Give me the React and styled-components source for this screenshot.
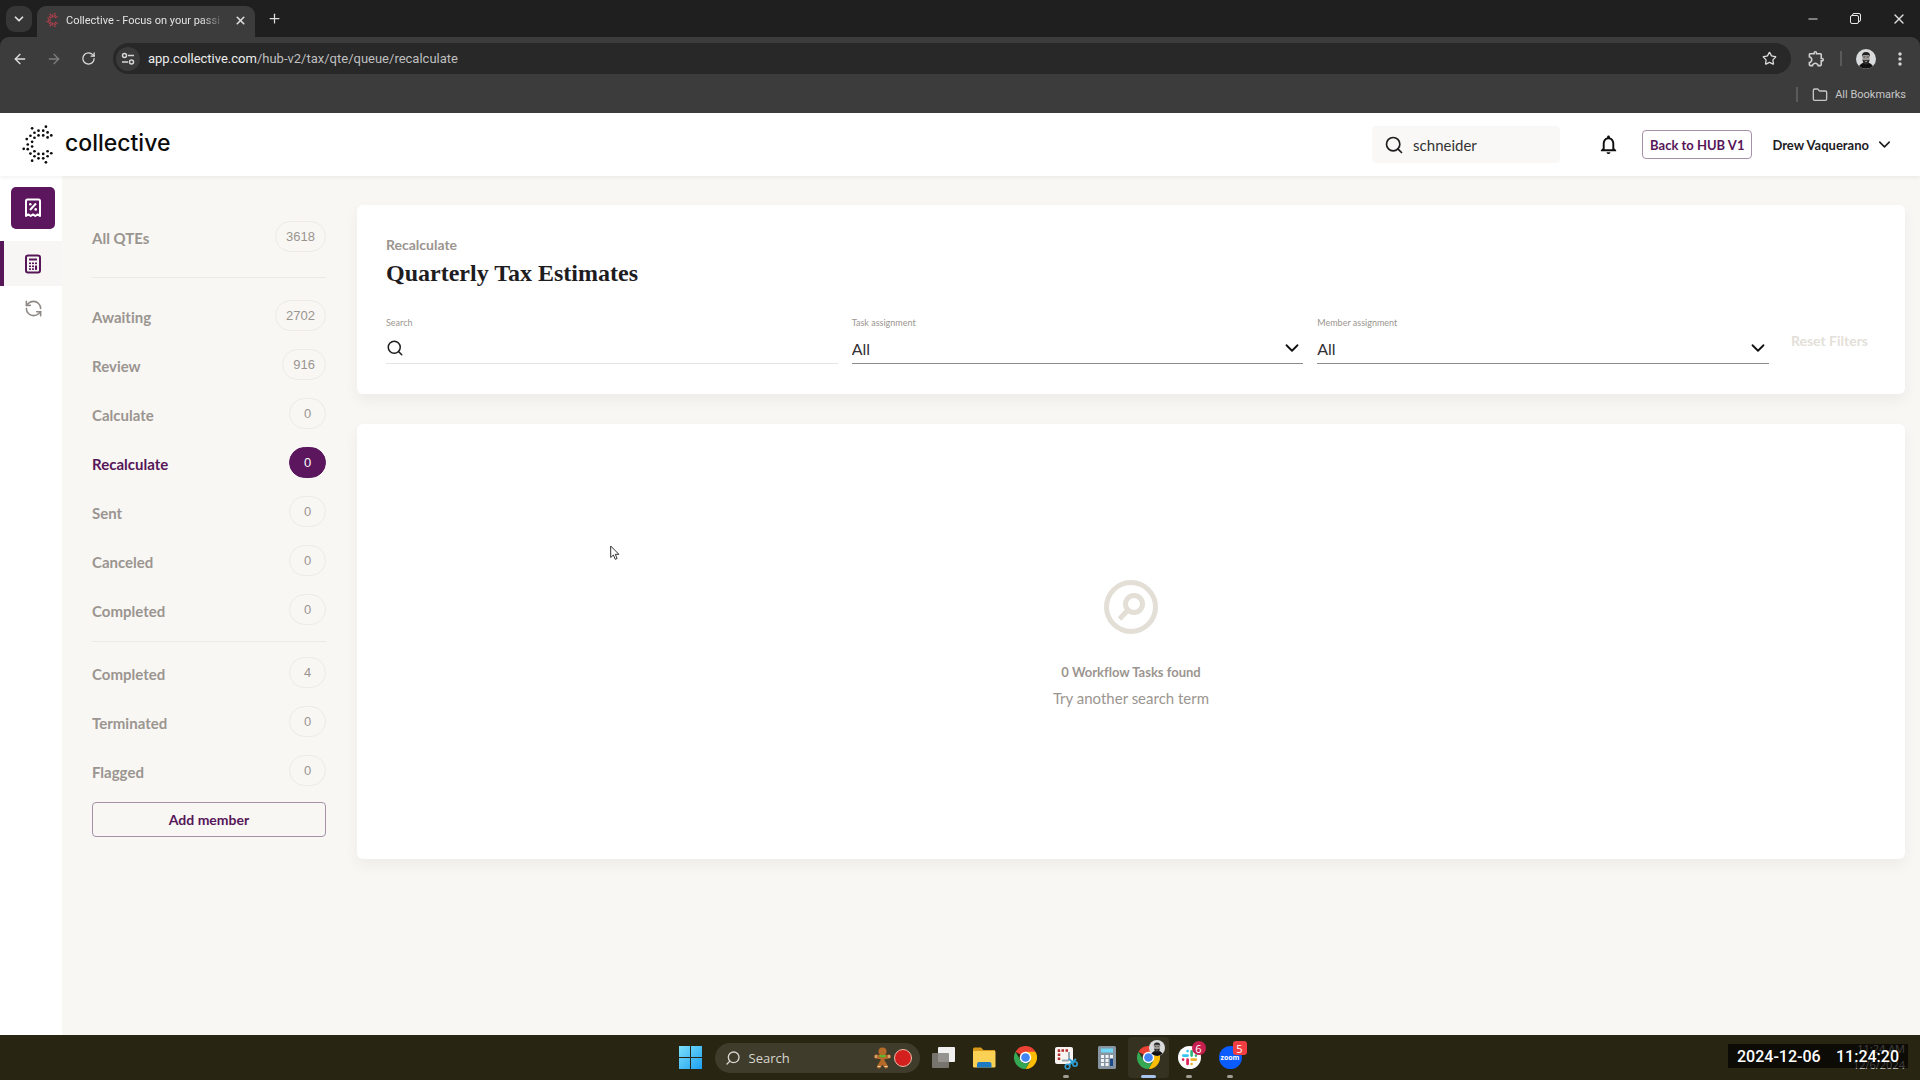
import React, { useState } from 'react';
import styled, { createGlobalStyle } from 'styled-components';
import { Search, ChevronDown, RefreshCcw, Plus, X, Minus, ArrowLeft, ArrowRight, RotateCw, Folder, Star } from 'lucide-react';
import { MdNotificationsNone, MdOutlineExtension, MdMoreVert } from 'react-icons/md';

const GlobalStyle = createGlobalStyle`
    * {
        box-sizing: border-box;
    }
    body {
        margin: 0;
        font-family: Lato, 'Liberation Sans', sans-serif;
        font-variant-ligatures: none;
        color: #1e1c1f;
        background-color: #f8f7f4;
    }
    button, input, select {
        font-family: inherit;
        color: inherit;
        border: none;
        background: none;
        padding: 0;
        margin: 0;
        outline: none;
    }
    a {
        color: inherit;
        text-decoration: none;
    }
    svg {
        display: block;
        flex-shrink: 0;
    }
`;

const logoDots = [
    [96, 384], [137, 379], [115, 391], [129, 391], [103, 397], [142, 396],
    [91, 406], [115, 405], [129, 405], [153, 405], [103, 412], [142, 411],
    [80, 416], [96, 424], [83, 432], [96, 438], [71, 445], [83, 446],
    [91, 459], [103, 452], [115, 460], [129, 460], [142, 452], [153, 458],
    [103, 467], [115, 473], [129, 473], [142, 467], [96, 480], [137, 485],
];

const DotLogo = ({ size, color, r = 4 }) => (
    <svg width={size} height={size} viewBox="54 374 116 116" fill={color} aria-hidden="true">
        {logoDots.map(([x, y]) => <circle key={`${x}-${y}`} cx={x} cy={y} r={r} />)}
    </svg>
);

const ReceiptIcon = () => (
    <svg width="18" height="20" viewBox="0 0 18 20" fill="none" stroke="#fff" strokeWidth="2" aria-hidden="true">
        <path d="M2 18V3a1.5 1.5 0 0 1 1.5-1.5h11A1.5 1.5 0 0 1 16 3v15l-2.3-1.6-2.4 1.6L9 16.4 6.7 18l-2.4-1.6z" strokeLinejoin="round" />
        <path d="M6 12l6-6.5" />
        <circle cx="6.3" cy="6.3" r="1.3" fill="#fff" stroke="none" />
        <circle cx="11.7" cy="11.4" r="1.3" fill="#fff" stroke="none" />
    </svg>
);

const CalculatorIcon = () => (
    <svg width="16" height="20" viewBox="0 0 16 20" aria-hidden="true">
        <rect x="1" y="1.5" width="14" height="17" rx="2" fill="none" stroke="#561658" strokeWidth="2" />
        <g fill="#561658">
            <rect x="4" y="4.5" width="8" height="2" />
            <rect x="4" y="8.5" width="2" height="1.6" />
            <rect x="7" y="8.5" width="2" height="1.6" />
            <rect x="10" y="8.5" width="2" height="1.6" />
            <rect x="4" y="11.5" width="2" height="1.6" />
            <rect x="7" y="11.5" width="2" height="1.6" />
            <rect x="4" y="14.3" width="2" height="1.6" />
            <rect x="7" y="14.3" width="2" height="1.6" />
            <rect x="10" y="11.5" width="2" height="4.4" />
        </g>
    </svg>
);

const EmptyIcon = () => (
    <svg width="54" height="54" viewBox="0 0 54 54" fill="none" stroke="#e3dfd6" strokeWidth="5" aria-hidden="true">
        <circle cx="27" cy="27" r="24.5" />
        <circle cx="30" cy="24" r="8.5" />
        <path d="M24 30l-8.5 9" />
    </svg>
);

const TuneIcon = () => (
    <svg width="14" height="14" viewBox="0 0 14 14" fill="none" stroke="#d6d6d6" strokeWidth="1.5" aria-hidden="true">
        <circle cx="3.5" cy="3.5" r="2" />
        <path d="M7 3.5h6M1 10h6" />
        <circle cx="10.5" cy="10" r="2" />
    </svg>
);

const RestoreIcon = () => (
    <svg width="11" height="11" viewBox="0 0 11 11" fill="none" stroke="#e8e8e8" aria-hidden="true">
        <rect x="0.5" y="2.5" width="8" height="8" rx="1.5" />
        <path d="M2.5 2.5V2A1.5 1.5 0 0 1 4 .5h5A1.5 1.5 0 0 1 10.5 2v5A1.5 1.5 0 0 1 9 8.5h-.5" />
    </svg>
);

const Portrait = ({ size }) => (
    <svg width={size} height={size} viewBox="0 0 20 20" aria-hidden="true">
        <circle cx="10" cy="10" r="10" fill="#d9dadb" />
        <path d="M3 17q2-3 5-3.5h4q3 .5 5 3.5a10 10 0 0 1-14 0z" fill="#111" />
        <path d="M6.5 7q0-3 3.5-3t3.5 3v4q-1 4-3.5 4t-3.5-4z" fill="#9c9896" />
        <path d="M6 8q-.5-5 4-5t4 5l-1-2H7z" fill="#222" />
        <path d="M6.5 10.5q1.5 1.2 3.5.5 2 .7 3.500-.5-.5 5-3.500 5t-3.500-5z" fill="#2b2a2a" />
        <path d="M7.3 8h2M10.7 8h2" stroke="#333" strokeWidth=".8" />
        <path d="M9 12.5h2" stroke="#b5b0ae" strokeWidth=".8" />
    </svg>
);

const Chrome = () => (
    <svg width="23" height="23" viewBox="0 0 48 48" aria-hidden="true">
        <path d="M24 24L3.200 12A24 24 0 0 1 44.800 12z" fill="#ea4335" />
        <path d="M24 12h20.800A24 24 0 0 1 24 48l10.400-18z" fill="#fbbc05" />
        <path d="M3.200 12l10.400 18A12 12 0 0 0 34.400 30L24 48A24 24 0 0 1 3.200 12z" fill="#34a853" />
        <circle cx="24" cy="24" r="12" fill="#fff" />
        <circle cx="24" cy="24" r="9" fill="#4285f4" />
    </svg>
);

const Windows = () => (
    <svg width="23" height="23" viewBox="0 0 23 23" aria-hidden="true">
        <defs>
            <linearGradient id="win" x1="0" y1="0" x2="1" y2="1">
                <stop offset="0" stopColor="#7be0fb" />
                <stop offset="1" stopColor="#1d9ff0" />
            </linearGradient>
        </defs>
        <path d="M0 0h11v11H0zM12 0h11v11H12zM0 12h11v11H0zM12 12h11v11H12z" fill="url(#win)" />
    </svg>
);

const TaskView = () => (
    <svg width="23" height="21" viewBox="0 0 23 21" aria-hidden="true">
        <rect x="6" width="17" height="15" rx="1" fill="#f1f0f0" />
        <rect y="6" width="17" height="15" rx="1" fill="#85837f" fillOpacity=".85" />
    </svg>
);

const Explorer = () => (
    <svg width="24" height="21" viewBox="0 0 24 21" aria-hidden="true">
        <path d="M1 2a1.5 1.5 0 0 1 1.5-1.5H9L11.5 3H23v5H1z" fill="#d99a1c" />
        <rect x="1" y="4" width="22.5" height="16.5" rx="1" fill="#fad155" />
        <path d="M5 20.5V17a2 2 0 0 1 2-2h10.5a2 2 0 0 1 2 2v3.5z" fill="#1f7ac4" />
    </svg>
);

const Snip = () => (
    <svg width="24" height="24" viewBox="0 0 24 24" aria-hidden="true">
        <rect x="1" y="1" width="18" height="17" rx="2" fill="#f7f4f2" />
        <path d="M5 14V4.5h9" fill="none" stroke="#b62b2b" strokeWidth="2.5" strokeDasharray="2.5 1.5" />
        <path d="M15 6v8M8 14.5h7" stroke="#9aa7b2" strokeWidth="2" />
        <path d="M22 13l-7 6M15 13l5 4" stroke="#2f9fd6" strokeWidth="2" />
        <circle cx="13.5" cy="20.5" r="2.3" fill="none" stroke="#2f9fd6" strokeWidth="1.6" />
        <circle cx="21" cy="18" r="2.2" fill="none" stroke="#2f9fd6" strokeWidth="1.6" />
    </svg>
);

const CalcApp = () => (
    <svg width="18" height="23" viewBox="0 0 18 23" aria-hidden="true">
        <rect width="18" height="23" rx="1.5" fill="#8794a1" />
        <rect x="3" y="2.5" width="12" height="4" fill="#6fd6f5" />
        <g fill="#f1f4f7">
            <rect x="3" y="9" width="3" height="3" />
            <rect x="7.5" y="9" width="3" height="3" />
            <rect x="3" y="13" width="3" height="3" />
            <rect x="7.5" y="13" width="3" height="3" />
            <rect x="3" y="17" width="3" height="3" />
            <rect x="7.5" y="17" width="3" height="3" />
            <rect x="12" y="9" width="3" height="3" />
        </g>
        <rect x="12" y="13" width="3" height="7" fill="#1b4a8d" />
    </svg>
);

const Slack = () => (
    <svg width="23" height="23" viewBox="0 0 24 24" aria-hidden="true">
        <circle cx="12" cy="12" r="12" fill="#fff" />
        <g strokeWidth="2.8" strokeLinecap="round">
            <path d="M5.5 10H10M10 5.3h0" stroke="#36c5f0" />
            <path d="M14.2 5.5V10M18.7 10h0" stroke="#2eb67d" />
            <path d="M14.2 14.2h4.5M14.2 18.8h0" stroke="#ecb22e" />
            <path d="M10 14.2v4.5M5.3 14.2h0" stroke="#e01e5a" />
        </g>
    </svg>
);

const Gingerbread = () => (
    <svg width="17" height="22" viewBox="0 0 17 22" aria-hidden="true">
        <circle cx="8.5" cy="4.5" r="4" fill="#b56a2a" />
        <path d="M8.5 8v7M2 9.5l6.5 1 6.5-1M8.5 14L5 19.5M8.5 14l3.5 5.5" stroke="#b56a2a" strokeWidth="4" strokeLinecap="round" fill="none" />
        <path d="M5.5 8.5q3 1.5 6 0" stroke="#5cb531" strokeWidth="2" fill="none" />
        <path d="M3.5 19.5h3M10.5 19.5h3M2 8v3M15 8v3" stroke="#f3d9b5" />
    </svg>
);

const PointerArrow = () => (
    <svg width="10" height="16" viewBox="0 0 10 16" aria-hidden="true">
        <path d="M.7 1v11.5l2.7-2.5 1.8 4.3 1.9-.8L5.3 9.3h3.6z" fill="#fff" stroke="#333" strokeWidth="1" />
    </svg>
);

const topItems = [{ name: 'All QTEs', count: 3618 }];
const stageItems = [
    { name: 'Awaiting', count: 2702 },
    { name: 'Review', count: 916 },
    { name: 'Calculate', count: 0 },
    { name: 'Recalculate', count: 0, active: true },
    { name: 'Sent', count: 0 },
    { name: 'Canceled', count: 0 },
    { name: 'Completed', count: 0 },
];
const statusItems = [
    { name: 'Completed', count: 4 },
    { name: 'Terminated', count: 0 },
    { name: 'Flagged', count: 0 },
];

const QueueList = ({ items }) => (
    <List>
        {items.map(({ name, count, active }) => (
            <li key={name}>
                <QueueLink href={`#${name.toLowerCase()}`} $active={active}>
                    <span>{name}</span>
                    <Count $active={active}>{count}</Count>
                </QueueLink>
            </li>
        ))}
    </List>
);

const SelectField = ({ id, label }) => (
    <Field>
        <label htmlFor={id}>{label}</label>
        <SelectWrap>
            <select id={id} defaultValue="All">
                <option>All</option>
            </select>
            <ChevronDown size={22} color="#111" strokeWidth={2} />
        </SelectWrap>
    </Field>
);

const App = () => {
    const [query, setQuery] = useState('schneider');
    return (
        <Screen>
            <GlobalStyle />
            <BrowserTop>
                <TabStrip>
                    <TabMenu aria-label="Search tabs"><ChevronDown size={14} strokeWidth={3} /></TabMenu>
                    <Tab>
                        <DotLogo size={14} color="#c2414e" r={6} />
                        <p>Collective - Focus on your passi</p>
                        <IconButton $size={16} aria-label="Close tab"><X size={13} strokeWidth={3} /></IconButton>
                    </Tab>
                    <IconButton $size={28} aria-label="New tab"><Plus size={15} strokeWidth={2} /></IconButton>
                    <WindowButtons>
                        <IconButton $size={43} aria-label="Minimize"><Minus size={14} strokeWidth={2} /></IconButton>
                        <IconButton $size={43} aria-label="Restore"><RestoreIcon /></IconButton>
                        <IconButton $size={43} aria-label="Close"><X size={16} strokeWidth={2} /></IconButton>
                    </WindowButtons>
                </TabStrip>
                <Toolbar>
                    <IconButton $size={34} aria-label="Back"><ArrowLeft size={16} /></IconButton>
                    <IconButton $size={34} $dim aria-label="Forward"><ArrowRight size={16} /></IconButton>
                    <IconButton $size={34} aria-label="Reload"><RotateCw size={15} strokeWidth={2} /></IconButton>
                    <AddressBar>
                        <SiteInfo aria-label="Site information"><TuneIcon /></SiteInfo>
                        <p>app.collective.com<span>/hub-v2/tax/qte/queue/recalculate</span></p>
                        <IconButton $size={28} aria-label="Bookmark"><Star size={15} /></IconButton>
                    </AddressBar>
                    <ToolbarEnd>
                        <MdOutlineExtension size={19} color="#d0d0d0" />
                        <Separator />
                        <Portrait size={20} />
                        <MdMoreVert size={20} color="#d6d6d6" />
                    </ToolbarEnd>
                </Toolbar>
                <BookmarkBar>
                    <Separator />
                    <BookmarkButton><Folder size={16} strokeWidth={2} />All Bookmarks</BookmarkButton>
                </BookmarkBar>
            </BrowserTop>

            <Header>
                <Brand href="#home"><DotLogo size={39} color="#0c0c0c" /><span>collective</span></Brand>
                <HeaderSearch>
                    <Search size={20} strokeWidth={2} />
                    <input aria-label="Search members" value={query} onChange={(e) => setQuery(e.target.value)} />
                </HeaderSearch>
                <IconButton $size={24} $dark aria-label="Notifications"><MdNotificationsNone size={23} /></IconButton>
                <HubButton>Back to HUB V1</HubButton>
                <UserMenu>Drew Vaquerano<ChevronDown size={19} strokeWidth={2} /></UserMenu>
            </Header>

            <Body>
                <Rail aria-label="Sections">
                    <RailTile href="#taxes" aria-label="Taxes"><ReceiptIcon /></RailTile>
                    <RailLink href="#estimates" $active aria-label="Estimates"><CalculatorIcon /></RailLink>
                    <RailLink href="#sync" aria-label="Sync"><RefreshCcw size={19} color="#8f8986" /></RailLink>
                </Rail>
                <Sidebar>
                    <QueueList items={topItems} />
                    <Divider $loose />
                    <QueueList items={stageItems} />
                    <Divider />
                    <QueueList items={statusItems} />
                    <AddButton>Add member</AddButton>
                </Sidebar>
                <Main>
                    <Card>
                        <h2>Recalculate</h2>
                        <h1>Quarterly Tax Estimates</h1>
                        <Filters>
                            <Field $light>
                                <label htmlFor="filter-search">Search</label>
                                <SearchWrap>
                                    <Search size={18} strokeWidth={2} />
                                    <input id="filter-search" />
                                </SearchWrap>
                            </Field>
                            <SelectField id="task" label="Task assignment" />
                            <SelectField id="member" label="Member assignment" />
                            <ResetButton disabled>Reset Filters</ResetButton>
                        </Filters>
                    </Card>
                    <EmptyCard>
                        <EmptyIcon />
                        <h3>0 Workflow Tasks found</h3>
                        <p>Try another search term</p>
                        <Pointer><PointerArrow /></Pointer>
                    </EmptyCard>
                </Main>
            </Body>

            <Taskbar>
                <Slot aria-label="Start"><Windows /></Slot>
                <TaskSearch>
                    <Search size={16} strokeWidth={2} />
                    <span>Search</span>
                    <Gingerbread />
                    <RedBall />
                </TaskSearch>
                <Slot aria-label="Task view"><TaskView /></Slot>
                <Slot aria-label="File Explorer"><Explorer /></Slot>
                <Slot aria-label="Chrome"><Chrome /></Slot>
                <Slot aria-label="Snipping Tool" $open><Snip /></Slot>
                <Slot aria-label="Calculator"><CalcApp /></Slot>
                <Slot aria-label="Chrome, Drew" $active>
                    <Chrome />
                    <Badge $face><Portrait size={16} /></Badge>
                </Slot>
                <Slot aria-label="Slack" $open><Slack /><Badge>6</Badge></Slot>
                <Slot aria-label="Zoom" $open><Zoom>zoom</Zoom><Badge $square>5</Badge></Slot>
                <Clock>11:24 AM<br />12/6/2024</Clock>
                <Stamp><span>2024-12-06</span><span>11:24:20</span></Stamp>
            </Taskbar>
        </Screen>
    );
};

const Screen = styled.div`
    min-height: 100vh;
    display: flex;
    flex-direction: column;
`;

const IconButton = styled.button`
    width: ${({ $size }) => $size}px;
    height: ${({ $size }) => Math.min($size, 28)}px;
    display: flex;
    align-items: center;
    justify-content: center;
    flex-shrink: 0;
    color: ${({ $dim, $dark }) => ($dark ? '#0f0f0f' : $dim ? '#7d7d7d' : '#dedede')};
`;

const BrowserTop = styled.div`
    background-color: #1f1f1f;
    font-family: Roboto, 'Open Sans', sans-serif;
`;

const TabStrip = styled.div`
    height: 37px;
    display: flex;
    align-items: center;
    padding-left: 6px;
`;

const TabMenu = styled.button`
    width: 26px;
    height: 26px;
    margin-right: 5px;
    display: flex;
    align-items: center;
    justify-content: center;
    border-radius: 9px;
    background-color: #363636;
    color: #e3e3e3;
`;

const Tab = styled.div`
    width: 218px;
    height: 31px;
    align-self: flex-end;
    display: flex;
    align-items: center;
    gap: 7px;
    padding: 0 7px 3px 8px;
    margin-right: 5px;
    border-radius: 9px 9px 0 0;
    background-color: #3c3c3c;
    p {
        flex: 1;
        margin: 0;
        white-space: nowrap;
        font-size: 11px;
        color: #e3e3e3;
        mask-image: linear-gradient(to right, #000 85%, transparent);
    }
`;

const WindowButtons = styled.div`
    margin-left: auto;
    display: flex;
`;

const Toolbar = styled.div`
    height: 43px;
    display: flex;
    align-items: center;
    padding: 0 10px 0 3px;
    border-radius: 9px 9px 0 0;
    background-color: #3c3c3c;
`;

const AddressBar = styled.div`
    flex: 1;
    height: 31px;
    margin-left: 8px;
    display: flex;
    align-items: center;
    padding: 0 8px 0 3px;
    border-radius: 16px;
    background-color: #282828;
    p {
        flex: 1;
        margin: 0 0 0 8px;
        font-size: 13px;
        color: #ececec;
    }
    span {
        color: #bfbfbf;
    }
`;

const SiteInfo = styled.button`
    width: 24px;
    height: 24px;
    display: flex;
    align-items: center;
    justify-content: center;
    border-radius: 50%;
    background-color: #3a3a3a;
`;

const ToolbarEnd = styled.div`
    display: flex;
    align-items: center;
    gap: 14px;
    padding-left: 16px;
`;

const Separator = styled.span`
    width: 2px;
    height: 15px;
    background-color: #5a5a5a;
`;

const BookmarkBar = styled.div`
    height: 33px;
    display: flex;
    align-items: center;
    justify-content: flex-end;
    gap: 14px;
    padding: 0 14px 4px 0;
    background-color: #3c3c3c;
`;

const BookmarkButton = styled.button`
    display: flex;
    align-items: center;
    gap: 7px;
    font-size: 11px;
    color: #c7c7c7;
`;

const Header = styled.header`
    height: 63px;
    display: flex;
    align-items: center;
    padding: 0 26px 0 18px;
    background-color: #fff;
    box-shadow: 0 1px 4px rgba(60, 50, 40, 0.08);
    z-index: 1;
`;

const Brand = styled.a`
    display: flex;
    align-items: center;
    gap: 8px;
    margin-right: auto;
    font-family: Inter, Lato, sans-serif;
    font-size: 23px;
    font-weight: 500;
    color: #0c0c0c;
    span {
        padding-bottom: 4px;
    }
`;

const HeaderSearch = styled.div`
    width: 188px;
    height: 37px;
    display: flex;
    align-items: center;
    gap: 9px;
    padding: 0 12px;
    margin-right: 36px;
    border-radius: 4px;
    background-color: #f9f8f6;
    input {
        width: 100%;
        min-width: 0;
        font-size: 15px;
        color: #333;
    }
`;

const HubButton = styled.button`
    height: 29px;
    margin: 0 20px 0 22px;
    padding: 0 7px;
    border: 1px solid #a692a8;
    border-radius: 4px;
    font-size: 13px;
    font-weight: 700;
    color: #561658;
`;

const UserMenu = styled.button`
    display: flex;
    align-items: center;
    gap: 6px;
    font-size: 13px;
    font-weight: 700;
`;

const Body = styled.div`
    flex: 1;
    display: flex;
`;

const Rail = styled.nav`
    width: 62px;
    display: flex;
    flex-direction: column;
    padding-top: 11px;
    background-color: #fff;
`;

const RailTile = styled.a`
    width: 44px;
    height: 42px;
    margin: 0 0 12px 11px;
    display: flex;
    align-items: center;
    justify-content: center;
    border-radius: 5px;
    background-color: #5b165e;
`;

const RailLink = styled.a`
    height: 45px;
    display: flex;
    align-items: center;
    justify-content: center;
    border-left: 4px solid ${({ $active }) => ($active ? '#561658' : 'transparent')};
    background-color: ${({ $active }) => ($active ? '#f8f6f4' : 'transparent')};
`;

const Sidebar = styled.aside`
    width: 295px;
    padding: 37px 31px 0 30px;
`;

const List = styled.ul`
    margin: 0;
    padding: 0;
    list-style: none;
`;

const QueueLink = styled.a`
    height: 49px;
    display: flex;
    align-items: center;
    justify-content: space-between;
    font-size: 15px;
    font-weight: 700;
    color: ${({ $active }) => ($active ? '#561658' : '#9b9590')};
`;

const Count = styled.span`
    min-width: 37px;
    height: 31px;
    display: flex;
    align-items: center;
    justify-content: center;
    padding: 0 10px;
    margin-bottom: 2px;
    border: 1px solid ${({ $active }) => ($active ? '#5b165e' : '#edeae7')};
    border-radius: 16px;
    background-color: ${({ $active }) => ($active ? '#5b165e' : 'transparent')};
    font-family: 'Liberation Sans', Lato, sans-serif;
    font-size: 13px;
    font-weight: 400;
    color: ${({ $active }) => ($active ? '#fff' : '#9b9590')};
`;

const Divider = styled.hr`
    height: 1px;
    margin: ${({ $loose }) => ($loose ? '15px 0 14px' : '6px 0 7px')};
    border: none;
    background-color: #eceae6;
`;

const AddButton = styled.button`
    width: 100%;
    height: 35px;
    margin-top: 6px;
    border: 1px solid #a692a8;
    border-radius: 4px;
    font-size: 14px;
    font-weight: 700;
    color: #561658;
`;

const Main = styled.main`
    flex: 1;
    display: flex;
    flex-direction: column;
    gap: 30px;
    padding: 29px 15px 29px 0;
`;

const Card = styled.section`
    padding: 31px 29px 30px;
    border-radius: 6px;
    background-color: #fff;
    box-shadow: 0 6px 14px rgba(60, 50, 40, 0.06);
    h2 {
        margin: 0;
        font-size: 14px;
        line-height: 18px;
        color: #9b9590;
    }
    h1 {
        margin: 4px 0 29px;
        font-family: 'Liberation Serif', 'Times New Roman', serif;
        font-size: 24px;
        line-height: 30px;
        font-weight: 700;
    }
`;

const Filters = styled.div`
    display: grid;
    grid-template-columns: 1fr 1fr 1fr auto;
    column-gap: 14px;
`;

const Field = styled.div`
    border-bottom: 1px solid ${({ $light }) => ($light ? '#e6e4e1' : '#8d898c')};
    label {
        display: block;
        font-size: 9px;
        line-height: 12px;
        color: #9b9590;
    }
`;

const SearchWrap = styled.div`
    height: 30px;
    display: flex;
    align-items: center;
    margin-top: 4px;
    input {
        flex: 1;
        font-size: 16px;
    }
`;

const SelectWrap = styled.div`
    height: 30px;
    margin-top: 4px;
    display: grid;
    align-items: center;
    select, svg {
        grid-area: 1 / 1;
    }
    select {
        width: 100%;
        appearance: none;
        font-size: 16px;
        color: #333036;
    }
    svg {
        justify-self: end;
        pointer-events: none;
    }
`;

const ResetButton = styled.button`
    align-self: center;
    padding: 0 8px;
    font-size: 14px;
    font-weight: 700;
    color: #e3e0d8;
`;

const EmptyCard = styled(Card)`
    position: relative;
    min-height: 435px;
    display: flex;
    flex-direction: column;
    align-items: center;
    justify-content: center;
    padding-top: 34px;
    h3 {
        margin: 28px 0 6px;
        font-size: 13px;
        line-height: 20px;
        color: #9b9590;
    }
    p {
        margin: 0;
        font-size: 15px;
        line-height: 20px;
        color: #9b9590;
    }
`;

const Pointer = styled.span`
    position: absolute;
    left: 253px;
    top: 121px;
`;

const Taskbar = styled.footer`
    position: relative;
    height: 45px;
    display: flex;
    align-items: center;
    justify-content: center;
    background-color: #292513;
    font-family: 'Open Sans', 'Noto Sans', sans-serif;
`;

const Slot = styled.button`
    position: relative;
    width: 41px;
    height: 41px;
    display: flex;
    align-items: center;
    justify-content: center;
    border-radius: 4px;
    background-color: ${({ $active }) => ($active ? '#353222' : 'transparent')};
    &::after {
        content: '';
        position: absolute;
        bottom: 0;
        width: ${({ $active }) => ($active ? '15px' : '6px')};
        height: 3px;
        border-radius: 2px;
        background-color: ${({ $active, $open }) => ($active ? '#a9c4ee' : $open ? '#a09d94' : 'transparent')};
    }
`;

const Badge = styled.span`
    position: absolute;
    top: 4px;
    right: 4px;
    min-width: 14px;
    height: 14px;
    display: flex;
    align-items: center;
    justify-content: center;
    border-radius: ${({ $square }) => ($square ? '3px' : '50%')};
    background-color: ${({ $square, $face }) => ($face ? 'transparent' : $square ? '#f03e42' : '#c51f4f')};
    font-size: 11px;
    color: #fff;
`;

const Zoom = styled.span`
    width: 23px;
    height: 23px;
    display: flex;
    align-items: center;
    justify-content: center;
    border-radius: 50%;
    background-color: #0b5cff;
    font-size: 7px;
    font-weight: 700;
    color: #fff;
`;

const TaskSearch = styled.button`
    width: 205px;
    height: 30px;
    display: flex;
    align-items: center;
    padding: 0 8px 0 10px;
    margin: 0 3px 0 4px;
    border-radius: 15px;
    background-color: #3f3c2b;
    font-size: 13px;
    color: #d8d6cf;
    gap: 3px;
    span:first-of-type {
        flex: 1;
        margin-left: 5px;
        text-align: left;
    }
    svg:first-child {
        transform: scaleX(-1);
    }
`;

const RedBall = styled.i`
    width: 18px;
    height: 18px;
    border: 1px solid #e9b9a6;
    border-radius: 50%;
    background-color: #d3201f;
`;

const Clock = styled.div`
    position: absolute;
    right: 15px;
    top: 6px;
    text-align: right;
    font-size: 11px;
    line-height: 16px;
    color: #c8c6c0;
`;

const Stamp = styled.div`
    position: absolute;
    right: 12px;
    top: 9px;
    width: 180px;
    height: 24px;
    display: flex;
    align-items: center;
    justify-content: space-between;
    padding: 0 9px;
    background-color: rgba(0, 0, 0, 0.68);
    font-family: Roboto, 'Liberation Sans', sans-serif;
    font-size: 16px;
    font-weight: 500;
    color: #fff;
`;

export default App;
